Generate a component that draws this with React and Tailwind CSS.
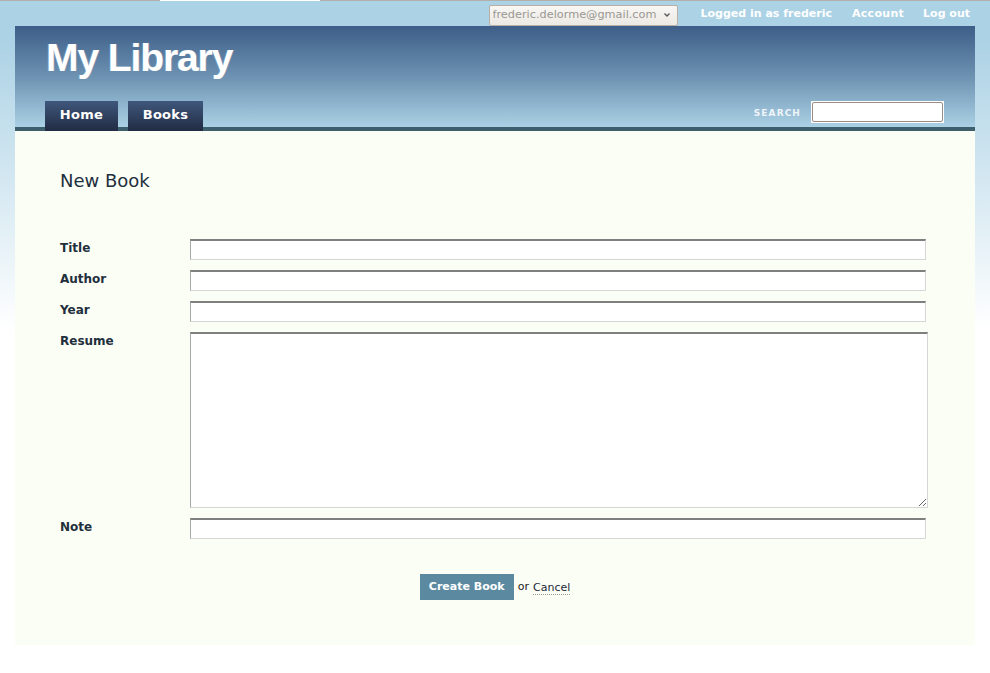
export default function App() {
  const font = "font-['DejaVu_Sans',sans-serif]";
  return (
    <div className={`min-h-[673px] w-full ${font} bg-[linear-gradient(to_bottom,#acd2e5_0px,#acd2e5_40px,#ffffff_330px)]`}>
      <div className="flex h-px">
        <div className="w-[160px] bg-[#b3b0ac]" />
        <div className="w-[160px] bg-white" />
        <div className="flex-1 bg-[#b3b0ac]" />
      </div>
      <div className="flex h-[25px] items-center justify-end pr-[20px] pt-[1px]">
        <div className="mt-[2px] flex h-[21px] w-[189px] items-center rounded-[2px] border border-[#b9afa5] bg-[linear-gradient(to_bottom,#f8f7f4,#ece9e4)] pl-[3px] pr-[6px]">
          <span className="overflow-hidden whitespace-nowrap text-[11.3px] leading-[14px] text-[#9a9792]">frederic.delorme@gmail.com</span>
          <svg width="8" height="6" viewBox="0 0 8 6" className="ml-auto shrink-0">
            <path d="M1.5 1.5 L4 4 L6.5 1.5" stroke="#555" strokeWidth="1.3" fill="none" />
          </svg>
        </div>
        <a className="ml-[23px] text-[11px] font-bold text-white">Logged in as frederic</a>
        <a className="ml-[20px] text-[11px] font-bold tracking-[0.3px] text-white">Account</a>
        <a className="ml-[19px] text-[11px] font-bold text-white">Log out</a>
      </div>
      <div className="mx-[15px] w-[960px]">
        <div className="h-[105px] bg-[linear-gradient(to_bottom,#3d5e88_0px,#6c91b1_50px,#abd1e5_101px,#3e606c_101px,#3e606c_105px)]">
          <div className="h-[75px] pl-[31px] pt-[12px]">
            <h1 className="font-['Liberation_Sans',Arial,sans-serif] text-[39px] font-bold leading-[39px] tracking-[-1.1px] text-white [text-shadow:1px_0_0_rgba(255,210,210,0.18),-1px_0_0_rgba(170,225,255,0.2)]">My Library</h1>
          </div>
          <div className="flex h-[30px] items-start pl-[30px]">
            <a className="flex h-[30px] w-[73px] items-center justify-center bg-[linear-gradient(to_bottom,#3f577c,#212b43)] pb-[2px] text-[13px] font-bold tracking-[0.3px] text-white">Home</a>
            <a className="ml-[10px] flex h-[30px] w-[75px] items-center justify-center bg-[linear-gradient(to_bottom,#3f577c,#212b43)] pb-[2px] text-[13px] font-bold tracking-[0.3px] text-white">Books</a>
            <div className="ml-auto flex items-center pr-[31px]">
              <span className="mr-[10px] mt-[4px] text-[9px] font-bold tracking-[1.1px] text-[#eef4f8]">SEARCH</span>
              <div className="bg-white p-px">
                <input className="block h-[20px] w-[131px] rounded-[2px] border border-[#9b8c84] bg-white outline-none" />
              </div>
            </div>
          </div>
        </div>
        <div className="h-[514px] bg-[#fbfef4] px-[45px] pt-[39px]">
          <h2 className="text-[18px] font-normal leading-[21px] text-[#1e2f3e]">New Book</h2>
          <div className="mt-[48px] flex flex-col gap-[10px] pr-[4px]">
            {["Title", "Author", "Year"].map((l) => (
              <div key={l} className="flex items-start">
                <label className="w-[130px] pt-[2px] text-[12px] font-bold leading-[14px] text-[#1f2f3d]">{l}</label>
                <input className="h-[21px] flex-1 border border-t-2 border-t-[#7f7f7f] border-l-[#a8a8a8] border-r-[#d6d6d6] border-b-[#d6d6d6] bg-white outline-none" />
              </div>
            ))}
            <div className="flex items-start">
              <label className="w-[130px] pt-[2px] text-[12px] font-bold leading-[14px] text-[#1f2f3d]">Resume</label>
              <textarea className="mr-[-2px] h-[176px] flex-1 resize border border-t-2 border-t-[#7f7f7f] border-l-[#a8a8a8] border-r-[#d6d6d6] border-b-[#d6d6d6] bg-white outline-none" />
            </div>
            <div className="flex items-start">
              <label className="w-[130px] pt-[2px] text-[12px] font-bold leading-[14px] text-[#1f2f3d]">Note</label>
              <input className="h-[21px] flex-1 border border-t-2 border-t-[#7f7f7f] border-l-[#a8a8a8] border-r-[#d6d6d6] border-b-[#d6d6d6] bg-white outline-none" />
            </div>
          </div>
          <div className="mt-[35px] flex items-center justify-center">
            <button className="h-[26px] w-[94px] bg-[#5b8aa0] pt-[1px] text-[11px] font-bold text-white">Create Book</button>
            <span className="ml-[4px] mt-[1px] text-[11px] text-[#222]">or</span>
            <a className="ml-[4px] mt-[2px] border-b border-dotted border-[#999] text-[11px] leading-[13px] text-[#1e2a3a]">Cancel</a>
          </div>
        </div>
      </div>
    </div>
  );
}
